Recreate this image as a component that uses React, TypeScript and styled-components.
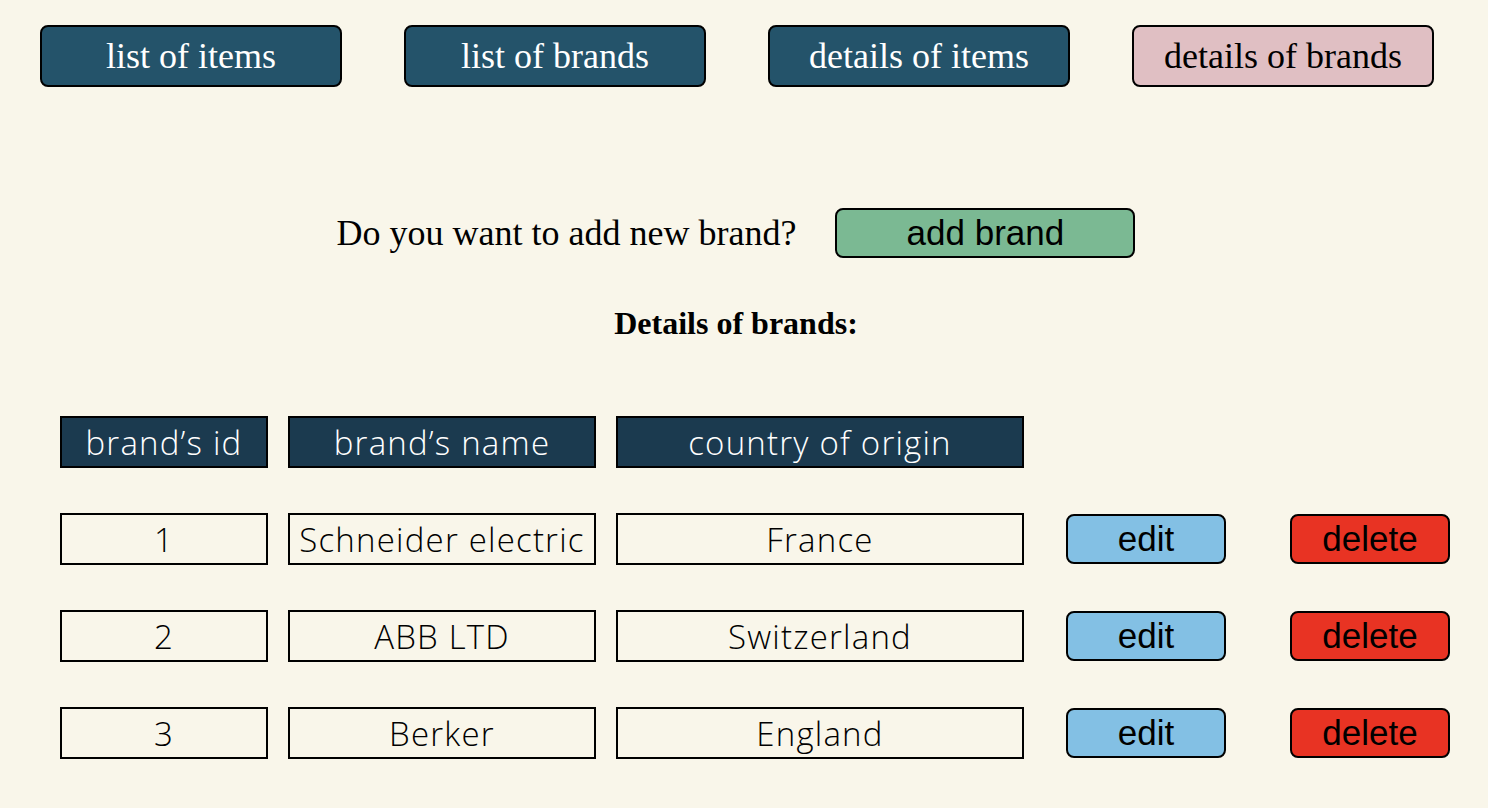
import styled, { createGlobalStyle } from "styled-components";

const brands = [
	{ id: 1, name: "Schneider electric", country: "France" },
	{ id: 2, name: "ABB LTD", country: "Switzerland" },
	{ id: 3, name: "Berker", country: "England" },
];

const tabs = ["list of items", "list of brands", "details of items", "details of brands"];

export default function App() {
	return (
		<>
			<GlobalStyle />
			<Page>
				<Nav>
					{tabs.map((t, i) => (
						<NavButton key={t} $active={i === tabs.length - 1}>
							{t}
						</NavButton>
					))}
				</Nav>
				<AddRow>
					<Question>Do you want to add new brand?</Question>
					<AddButton type="button">add brand</AddButton>
				</AddRow>
				<Heading>Details of brands:</Heading>
				<Table>
					<HeadCell>brand’s id</HeadCell>
					<HeadCell>brand’s name</HeadCell>
					<HeadCell>country of origin</HeadCell>
					<span />
					<span />
					{brands.map((b) => (
						<Row key={b.id}>
							<Cell>{b.id}</Cell>
							<Cell>{b.name}</Cell>
							<Cell>{b.country}</Cell>
							<ActionButton type="button" $color="#83c0e4">
								edit
							</ActionButton>
							<ActionButton type="button" $color="#e83323">
								delete
							</ActionButton>
						</Row>
					))}
				</Table>
			</Page>
		</>
	);
}

const GlobalStyle = createGlobalStyle`
	body {
		margin: 0;
		background: #f9f6ea;
		font-family: "Liberation Serif", "Times New Roman", serif;
	}
`;

const Page = styled.div`
	padding: 25px 0 40px 0;
`;

const Nav = styled.nav`
	display: flex;
	gap: 62px;
	padding-left: 40px;
`;

const NavButton = styled.button<{ $active?: boolean }>`
	width: 302px;
	height: 62px;
	border: 2px solid #000;
	border-radius: 8px;
	background: ${(p) => (p.$active ? "#e0bfc3" : "#24536a")};
	color: ${(p) => (p.$active ? "#000" : "#ffffff")};
	font-family: "Liberation Serif", "Times New Roman", serif;
	font-size: 36px;
	padding: 0;
	cursor: pointer;
`;

const AddRow = styled.div`
	display: flex;
	align-items: center;
	justify-content: center;
	gap: 39px;
	margin-top: 121px;
	padding-right: 16px;
`;

const Question = styled.span`
	font-size: 36px;
	color: #000;
`;

const AddButton = styled.button`
	width: 300px;
	height: 50px;
	background: #7bb993;
	border: 2px solid #000;
	border-radius: 8px;
	font-family: "Liberation Sans", Arial, sans-serif;
	font-size: 35px;
	color: #000;
	padding: 0;
`;

const Heading = styled.h3`
	margin: 47px 0 0 0;
	padding-right: 16px;
	text-align: center;
	font-size: 32px;
	line-height: 36px;
	font-weight: 700;
`;

const Table = styled.div`
	display: grid;
	grid-template-columns: 208px 308px 408px 182px 204px;
	column-gap: 20px;
	row-gap: 45px;
	margin-top: 75px;
	padding-left: 60px;
	font-family: "Open Sans", Lato, sans-serif;
	font-weight: 300;
`;

const Row = styled.div`
	display: contents;
`;

const HeadCell = styled.div`
	height: 52px;
	box-sizing: border-box;
	border: 2px solid #000;
	background: #1b3a4f;
	color: #ffffff;
	font-size: 33px;
	letter-spacing: 1.2px;
	display: flex;
	align-items: center;
	justify-content: center;
	white-space: nowrap;
`;

const Cell = styled(HeadCell)`
	background: transparent;
	color: #000;
	overflow: hidden;
`;

const ActionButton = styled.button<{ $color: string }>`
	justify-self: end;
	align-self: center;
	width: 160px;
	height: 50px;
	background: ${(p) => p.$color};
	border: 2px solid #000;
	border-radius: 8px;
	font-family: "Liberation Sans", Arial, sans-serif;
	font-size: 35px;
	color: #000;
	padding: 0;
`;
